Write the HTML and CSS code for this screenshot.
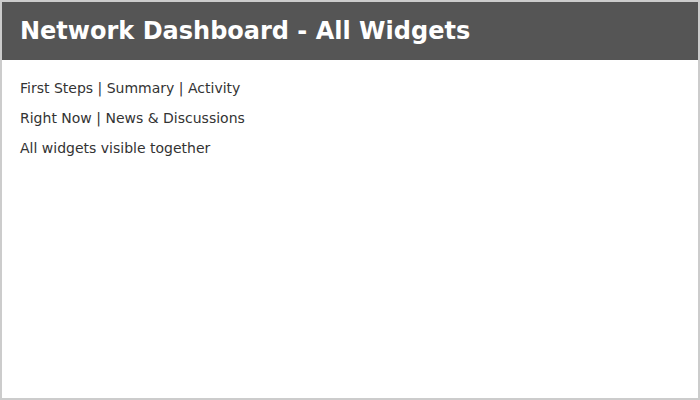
FILE: index.html
```html
<!DOCTYPE html>
<html>
<head>
<meta charset="utf-8">
<link rel="stylesheet" href="styles.css">
</head>
<body>
<div class="frame">
  <div class="header"><h1 class="title">Network Dashboard - All Widgets</h1></div>
  <div class="content">
    <p class="line">First Steps | Summary | Activity</p>
    <p class="line">Right Now | News &amp; Discussions</p>
    <p class="line">All widgets visible together</p>
  </div>
</div>
</body>
</html>
```
FILE: styles.css
```css
html, body { margin: 0; padding: 0; background: #fff; }
.frame {
  width: 700px; height: 400px; box-sizing: border-box;
  border: 2px solid #cccccc; background: #fff;
  font-family: "DejaVu Sans", sans-serif;
}
.header {
  height: 58px; background: #555555; display: flex; align-items: center;
  padding: 0 18px;
}
.title { margin: 0; color: #fff; font-size: 24px; font-weight: bold; }
.content { padding: 13px 18px 0; }
.line { margin: 0; line-height: 30px; font-size: 14px; color: #333333; }
```
